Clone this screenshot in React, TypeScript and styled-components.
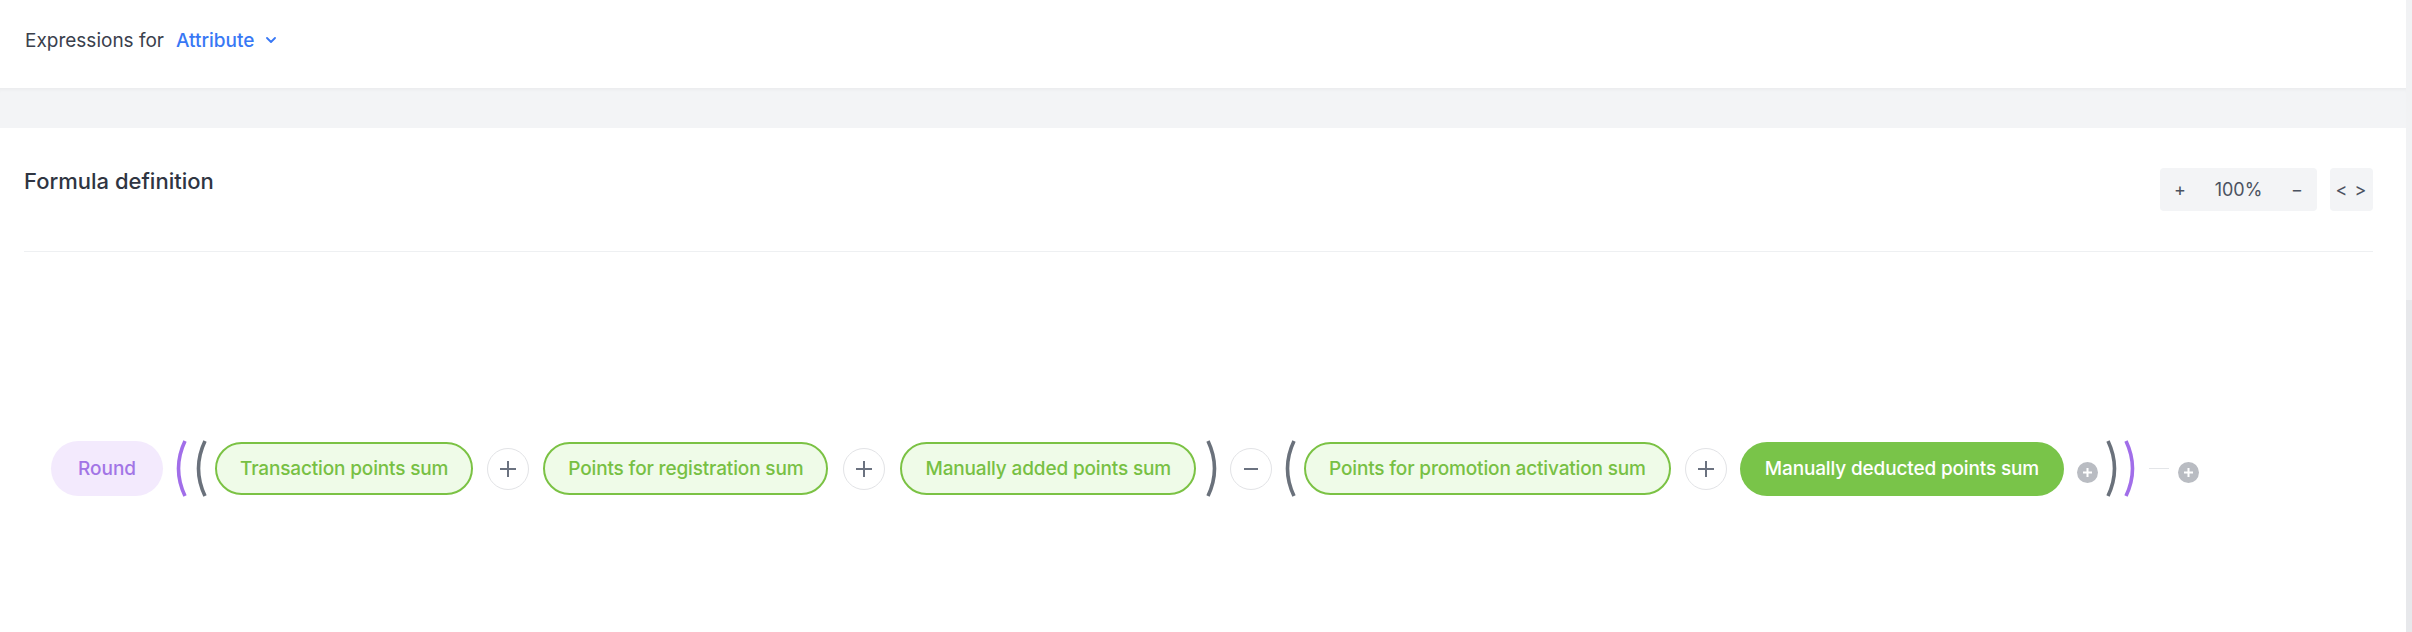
import React from "react";
import styled, { createGlobalStyle } from "styled-components";

const GlobalStyle = createGlobalStyle`
  html, body {
    margin: 0;
    padding: 0;
    background: #ffffff;
  }
  body {
    font-family: Inter, "Noto Sans", "Liberation Sans", sans-serif;
    -webkit-font-smoothing: antialiased;
  }
`;

const Page = styled.div`
  display: flex;
  width: 2412px;
  height: 632px;
  overflow: hidden;
`;

const Main = styled.div`
  flex: 1;
  display: flex;
  flex-direction: column;
  min-width: 0;
`;

const ScrollTrack = styled.div`
  width: 6px;
  background: #f1f2f4;
  display: flex;
  flex-direction: column;
`;

const ScrollThumb = styled.div`
  margin-top: 300px;
  flex: 1;
  background: #e7e8eb;
`;

const Header = styled.div`
  height: 88px;
  box-sizing: border-box;
  padding: 0 25px 8px;
  display: flex;
  align-items: center;
  background: #fff;
`;

const HeaderLabel = styled.span`
  font-size: 19px;
  color: #3a404c;
`;

const AttributeSelect = styled.button`
  display: flex;
  align-items: center;
  gap: 12px;
  margin-left: 12px;
  padding: 0;
  border: 0;
  background: none;
  font: inherit;
  font-size: 19px;
  font-weight: 500;
  color: #3878f5;
  cursor: pointer;
`;

const Band = styled.div`
  height: 40px;
  background: #f3f4f6;
  box-shadow: inset 0 4px 4px -3px rgba(0, 0, 0, 0.05);
`;

const Card = styled.div`
  flex: 1;
  background: #fff;
  padding: 40px 33px 0 24px;
`;

const TitleRow = styled.div`
  display: flex;
  align-items: flex-start;
  justify-content: space-between;
`;

const Title = styled.h2`
  margin: 0;
  font-size: 22px;
  line-height: 26px;
  font-weight: 500;
  color: #2f3542;
`;

const Controls = styled.div`
  display: flex;
  gap: 13px;
`;

const ZoomBox = styled.div`
  width: 157px;
  height: 43px;
  box-sizing: border-box;
  padding: 0 14px;
  display: flex;
  align-items: center;
  justify-content: space-between;
  background: #f3f4f6;
  border-radius: 4px;
  font-size: 18px;
  color: #4b5260;
`;

const CodeToggle = styled.div`
  width: 43px;
  height: 43px;
  display: flex;
  align-items: center;
  justify-content: center;
  background: #f3f4f6;
  border-radius: 4px;
  font-size: 18px;
  color: #4b5260;
  letter-spacing: 1px;
`;

const Divider = styled.hr`
  margin: 40px 0 0;
  border: 0;
  border-top: 1px solid #eef0f2;
`;

const FormulaRow = styled.div`
  display: flex;
  align-items: center;
  margin-top: 189px;
  padding-left: 27px;
  height: 55px;
`;

const Slot = styled.div<{ $ml: number }>`
  display: flex;
  align-items: center;
  margin-left: ${(p) => p.$ml}px;
  flex-shrink: 0;
`;

const FunctionPill = styled.div`
  width: 112px;
  height: 55px;
  border-radius: 28px;
  background: #f3eafd;
  color: #a275e6;
  font-size: 19px;
  font-weight: 500;
  display: flex;
  align-items: center;
  justify-content: center;
`;

const VariablePill = styled.div<{ $active?: boolean }>`
  height: ${(p) => (p.$active ? 54 : 53)}px;
  box-sizing: border-box;
  padding: 0 ${(p) => (p.$active ? 25 : 23)}px;
  border-radius: 27px;
  border: ${(p) => (p.$active ? "none" : "2px solid #7bc244")};
  background: ${(p) => (p.$active ? "#79c449" : "#effbe8")};
  color: ${(p) => (p.$active ? "#ffffff" : "#77c043")};
  font-size: 19px;
  font-weight: 500;
  letter-spacing: -0.15px;
  display: flex;
  align-items: center;
  white-space: nowrap;
`;

const OperatorCircle = styled.div`
  width: 42px;
  height: 42px;
  box-sizing: border-box;
  border-radius: 50%;
  border: 1px solid #e2e3e6;
  background: #fff;
  display: flex;
  align-items: center;
  justify-content: center;
`;

const AddDot = styled.div`
  width: 21px;
  height: 21px;
  border-radius: 50%;
  background: #b9bcc2;
  display: flex;
  align-items: center;
  justify-content: center;
  margin-top: 8px;
`;

const Connector = styled.div`
  width: 20px;
  height: 1px;
  background: #e3e5e8;
`;

const Chevron = () => (
  <svg width="10" height="6" viewBox="0 0 10 6">
    <path d="M1 1l4 4 4-4" fill="none" stroke="#3878f5" strokeWidth="1.8" strokeLinecap="round" strokeLinejoin="round" />
  </svg>
);

const PlusIcon = ({ size = 16, color = "#6b7280", w = 2 }: { size?: number; color?: string; w?: number }) => (
  <svg width={size} height={size} viewBox={`0 0 ${size} ${size}`}>
    <path d={`M${size / 2} 0V${size}M0 ${size / 2}H${size}`} stroke={color} strokeWidth={w} />
  </svg>
);

const MinusIcon = () => (
  <svg width="14" height="14" viewBox="0 0 14 14">
    <path d="M0 7H14" stroke="#6b7280" strokeWidth="2" />
  </svg>
);

const Paren = ({ close, color }: { close?: boolean; color: string }) => (
  <svg width="14" height="57" viewBox="0 0 14 57">
    <path
      d={close ? "M2 1Q15 28.5 2 56" : "M12 1Q-1 28.5 12 56"}
      fill="none"
      stroke={color}
      strokeWidth="3.6"
    />
  </svg>
);

const GRAY = "#6a717b";
const PURPLE = "#a16ee9";

export default function App() {
  return (
    <Page>
      <GlobalStyle />
      <Main>
        <Header>
          <HeaderLabel>Expressions for</HeaderLabel>
          <AttributeSelect>
            Attribute
            <Chevron />
          </AttributeSelect>
        </Header>
        <Band />
        <Card>
          <TitleRow>
            <Title>Formula definition</Title>
            <Controls>
              <ZoomBox>
                <span>+</span>
                <span>100%</span>
                <span>−</span>
              </ZoomBox>
              <CodeToggle>&lt; &gt;</CodeToggle>
            </Controls>
          </TitleRow>
          <Divider />
          <FormulaRow>
            <Slot $ml={0}><FunctionPill>Round</FunctionPill></Slot>
            <Slot $ml={10}><Paren color={PURPLE} /></Slot>
            <Slot $ml={6}><Paren color={GRAY} /></Slot>
            <Slot $ml={8}><VariablePill>Transaction points sum</VariablePill></Slot>
            <Slot $ml={14}><OperatorCircle><PlusIcon /></OperatorCircle></Slot>
            <Slot $ml={14}><VariablePill>Points for registration sum</VariablePill></Slot>
            <Slot $ml={15}><OperatorCircle><PlusIcon /></OperatorCircle></Slot>
            <Slot $ml={15}><VariablePill>Manually added points sum</VariablePill></Slot>
            <Slot $ml={10}><Paren close color={GRAY} /></Slot>
            <Slot $ml={10}><OperatorCircle><MinusIcon /></OperatorCircle></Slot>
            <Slot $ml={10}><Paren color={GRAY} /></Slot>
            <Slot $ml={8}><VariablePill>Points for promotion activation sum</VariablePill></Slot>
            <Slot $ml={14}><OperatorCircle><PlusIcon /></OperatorCircle></Slot>
            <Slot $ml={13}><VariablePill $active>Manually deducted points sum</VariablePill></Slot>
            <Slot $ml={13}><AddDot><PlusIcon size={9} color="#fff" w={2} /></AddDot></Slot>
            <Slot $ml={8}><Paren close color={GRAY} /></Slot>
            <Slot $ml={4}><Paren close color={PURPLE} /></Slot>
            <Slot $ml={11}><Connector /></Slot>
            <Slot $ml={9}><AddDot><PlusIcon size={9} color="#fff" w={2} /></AddDot></Slot>
          </FormulaRow>
        </Card>
      </Main>
      <ScrollTrack>
        <ScrollThumb />
      </ScrollTrack>
    </Page>
  );
}
